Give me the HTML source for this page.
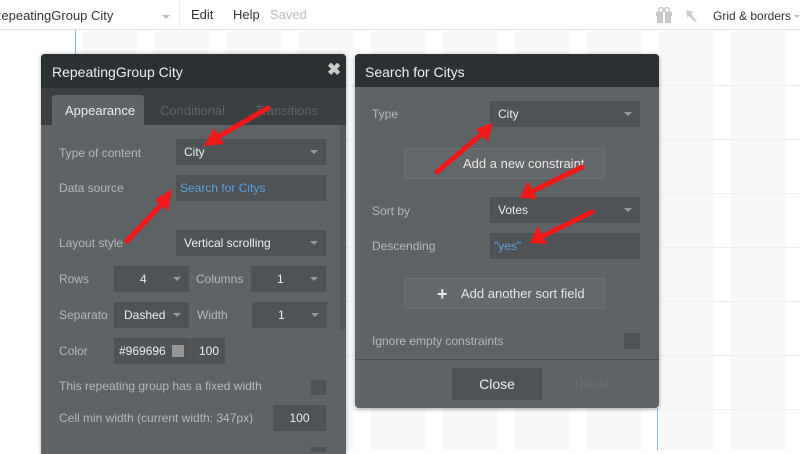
<!DOCTYPE html>
<html><head><meta charset="utf-8"><style>
*{margin:0;padding:0;box-sizing:border-box}
body{width:800px;height:450px;overflow:hidden;position:relative;font-family:"Liberation Sans",sans-serif;background:#fff}
.a{position:absolute}
.t{position:absolute;font-size:12px;color:#b4b7b9;line-height:14px;white-space:nowrap}
.dd{position:absolute;background:#4f5356;color:#eee;font-size:12px;line-height:26px;height:26px;padding-left:8px;white-space:nowrap}
.dd.c{text-align:center;padding-left:0}
.car{position:absolute;right:8px;top:11px;width:0;height:0;border-left:4px solid transparent;border-right:4px solid transparent;border-top:4px solid #999}
.gc{position:absolute;top:31px;height:419px;width:54px;background:#f8f8f8}
.gl{position:absolute;left:83px;width:717px;height:1px;background:#eeeeee}
</style></head><body>
<!-- grid -->
<div class="gc" style="left:83px"></div><div class="gc" style="left:155px"></div><div class="gc" style="left:227px"></div><div class="gc" style="left:299px"></div><div class="gc" style="left:371px"></div><div class="gc" style="left:443px"></div><div class="gc" style="left:515px"></div><div class="gc" style="left:587px"></div><div class="gc" style="left:659px"></div><div class="gc" style="left:731px"></div>
<div class="gl" style="top:85px"></div><div class="gl" style="top:139px"></div><div class="gl" style="top:193px"></div><div class="gl" style="top:247px"></div><div class="gl" style="top:301px"></div><div class="gl" style="top:355px"></div><div class="gl" style="top:409px"></div>
<div class="a" style="left:75px;top:30px;width:1px;height:24px;background:#8ab4e8"></div>
<div class="a" style="left:657px;top:408px;width:1px;height:42px;background:#8ab4e8"></div>
<!-- top bar -->
<div class="a" style="left:0;top:0;width:800px;height:30px;background:#fff;border-bottom:1px solid #e2e2e2"></div>
<div class="a" style="left:179px;top:0;width:1px;height:30px;background:#eee"></div>
<div class="t" style="left:-8px;top:9px;color:#333;font-size:13px">RepeatingGroup City</div>
<div class="a" style="left:162px;top:15px;border-left:4px solid transparent;border-right:4px solid transparent;border-top:4px solid #bbb"></div>
<div class="t" style="left:191px;top:8px;color:#333;font-size:13px">Edit</div>
<div class="t" style="left:233px;top:8px;color:#333;font-size:13px">Help</div>
<div class="t" style="left:270px;top:8px;color:#bbb;font-size:13px">Saved</div>
<svg class="a" style="left:654px;top:6px" width="20" height="18"><rect x="2" y="6" width="16" height="4" fill="#c8c8c8"/><rect x="3" y="10" width="14" height="7" fill="#c8c8c8"/><rect x="9" y="6" width="2" height="11" fill="#fff"/><circle cx="7" cy="4" r="2.5" fill="none" stroke="#c8c8c8" stroke-width="1.5"/><circle cx="13" cy="4" r="2.5" fill="none" stroke="#c8c8c8" stroke-width="1.5"/></svg>
<svg class="a" style="left:684px;top:8px" width="16" height="16"><path d="M2 2 L10 4 L7 6 L13 13 L11 14 L5 8 L3 10 Z" fill="#ccc"/></svg>
<div class="t" style="left:713px;top:9px;color:#333;font-size:12px;letter-spacing:0">Grid &amp; borders</div>
<div class="a" style="left:794px;top:15px;border-left:3px solid transparent;border-right:3px solid transparent;border-top:3px solid #bbb"></div>

<!-- left panel -->
<div class="a" style="left:41px;top:54px;width:305px;height:400px;background:#5f6366;border-radius:4px 4px 0 0;box-shadow:0 0 4px rgba(0,0,0,.3)"></div>
<div class="a" style="left:41px;top:54px;width:305px;height:34px;background:#2b3033;border-radius:4px 4px 0 0"></div>
<div class="t" style="left:52px;top:64px;color:#eee;font-size:14px;line-height:16px">RepeatingGroup City</div>
<div class="t" style="left:327px;top:63px;color:#ccc;font-size:17px;font-weight:bold">✖</div>
<div class="a" style="left:41px;top:88px;width:305px;height:37px;background:#3b3f42"></div>
<div class="a" style="left:52px;top:95px;width:92px;height:30px;background:#5f6366;border-radius:3px 3px 0 0"></div>
<div class="t" style="left:65px;top:104px;color:#eee;font-size:13px">Appearance</div>
<div class="t" style="left:160px;top:104px;color:#5d6164;font-size:13px">Conditional</div>
<div class="t" style="left:255px;top:104px;color:#5d6164;font-size:13px">Transitions</div>
<div class="a" style="left:340px;top:125px;width:6px;height:205px;background:#55595c"></div>
<div class="t" style="left:59px;top:146px">Type of content</div>
<div class="dd" style="left:176px;top:139px;width:150px">City<span class="car"></span></div>
<div class="t" style="left:59px;top:181px">Data source</div>
<div class="dd" style="left:176px;top:175px;width:150px;color:#5aa0e0;padding-left:4px">Search for Citys</div>
<div class="t" style="left:59px;top:236px">Layout style</div>
<div class="dd" style="left:176px;top:230px;width:150px">Vertical scrolling<span class="car"></span></div>
<div class="t" style="left:59px;top:272px">Rows</div>
<div class="dd" style="left:114px;top:266px;width:75px;padding-left:26px">4<span class="car"></span></div>
<div class="t" style="left:196px;top:272px">Columns</div>
<div class="dd" style="left:251px;top:266px;width:75px;padding-left:26px">1<span class="car"></span></div>
<div class="t" style="left:59px;top:308px">Separato</div>
<div class="dd" style="left:114px;top:302px;width:75px;padding-left:10px">Dashed<span class="car"></span></div>
<div class="t" style="left:197px;top:308px">Width</div>
<div class="dd" style="left:252px;top:302px;width:75px;padding-left:26px">1<span class="car"></span></div>
<div class="t" style="left:59px;top:344px">Color</div>
<div class="dd" style="left:114px;top:338px;width:111px;padding-left:5px">#969696<span class="a" style="left:58px;top:7px;width:12px;height:12px;background:#969696"></span><span class="a" style="left:76px;top:0;width:1px;height:26px;background:#5a5e61"></span><span class="a" style="left:85px;top:0">100</span></div>
<div class="t" style="left:59px;top:379px">This repeating group has a fixed width</div>
<div class="a" style="left:311px;top:380px;width:15px;height:15px;background:#4f5356"></div>
<div class="t" style="left:59px;top:411px">Cell min width (current width: 347px)</div>
<div class="dd c" style="left:273px;top:405px;width:53px">100</div>
<div class="a" style="left:311px;top:447px;width:15px;height:5px;background:#4f5356"></div>

<!-- right panel -->
<div class="a" style="left:355px;top:54px;width:304px;height:354px;background:#5f6366;border-radius:4px;box-shadow:0 1px 4px rgba(0,0,0,.35)"></div>
<div class="a" style="left:355px;top:54px;width:304px;height:33px;background:#2b3033;border-radius:4px 4px 0 0"></div>
<div class="t" style="left:365px;top:64px;color:#eee;font-size:14px;line-height:16px">Search for Citys</div>
<div class="t" style="left:372px;top:107px">Type</div>
<div class="dd" style="left:490px;top:101px;width:150px">City<span class="car"></span></div>
<div class="a" style="left:404px;top:148px;width:201px;height:31px;background:#64686b;border:1px solid #6e7275;border-radius:2px"></div>
<div class="t" style="left:463px;top:157px;color:#e6e6e6;font-size:13px">Add a new constraint</div>
<div class="t" style="left:372px;top:204px">Sort by</div>
<div class="dd" style="left:490px;top:197px;width:150px">Votes<span class="car"></span></div>
<div class="t" style="left:372px;top:239px">Descending</div>
<div class="dd" style="left:490px;top:233px;width:150px;color:#5aa0e0;padding-left:4px">"yes"</div>
<div class="a" style="left:404px;top:278px;width:201px;height:31px;background:#64686b;border:1px solid #6e7275;border-radius:2px"></div>
<div class="t" style="left:437px;top:285px;color:#e6e6e6;font-size:18px;font-weight:bold;line-height:18px">+</div>
<div class="t" style="left:461px;top:287px;color:#e6e6e6;font-size:13px">Add another sort field</div>
<div class="t" style="left:372px;top:334px">Ignore empty constraints</div>
<div class="a" style="left:624px;top:333px;width:16px;height:16px;background:#4f5356"></div>
<div class="a" style="left:355px;top:359px;width:304px;height:1px;background:#4a4e51"></div>
<div class="dd c" style="left:452px;top:368px;width:90px;height:32px;line-height:32px;font-size:14px">Close</div>
<div class="t" style="left:575px;top:377px;color:#6d7174">Delete</div>

<!-- arrows -->
<svg class="a" style="left:0;top:0" width="800" height="450">
<g stroke="#f21818" stroke-width="5" stroke-linecap="round" fill="#f21818">
<line x1="268" y1="108" x2="218" y2="137"/><polygon stroke="none" points="204,146 214,128 224,144"/>
<line x1="127" y1="241" x2="163" y2="203"/><polygon stroke="none" points="172,189 155,200 168,211"/>
<line x1="437" y1="172" x2="483" y2="133"/><polygon stroke="none" points="493,123 476,129 488,142"/>
<line x1="582" y1="167" x2="533" y2="191"/><polygon stroke="none" points="520,198 528,181 537,199"/>
<line x1="592" y1="212" x2="543" y2="236"/><polygon stroke="none" points="530,243 538,226 547,244"/>
</g></svg>
</body></html>
